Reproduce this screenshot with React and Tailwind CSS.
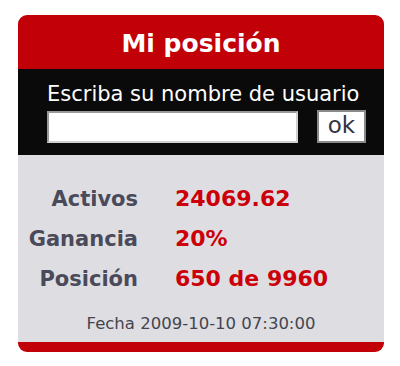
import React from 'react';

const rows = [
  { label: 'Activos', value: '24069.62' },
  { label: 'Ganancia', value: '20%' },
  { label: 'Posición', value: '650 de 9960' },
];

const App = () => {
  return (
    <div className="w-[400px] h-[366px] bg-white pt-[15px] pl-[18px]" style={{ fontFamily: '"DejaVu Sans", Verdana, sans-serif' }}>
      <div className="w-[366px] rounded-[9px] overflow-hidden bg-[#c10008]">
        {/* Title */}
        <div className="h-[54px] flex items-center justify-center text-white font-bold text-[25px] pt-[4px]">
          Mi posición
        </div>

        {/* Login */}
        <div className="h-[86px] bg-[#0a0a0a] pt-[13px] pl-[29px]">
          <div className="text-white text-[21px] leading-[24px] whitespace-nowrap">Escriba su nombre de usuario</div>
          <div className="flex items-center mt-[4px]">
            <input className="w-[251px] h-[32px] bg-white border-2 border-[#9a9a9a] border-b-[#d0d0d0] border-r-[#d0d0d0] outline-none" />
            <button className="ml-[19px] w-[49px] h-[33px] bg-white border-2 border-[#8a8a8a] text-[#333344] text-[23px] leading-none pb-[2px]">
              ok
            </button>
          </div>
        </div>

        {/* Stats */}
        <div className="h-[187px] bg-[#dedee2] pt-[30px]">
          <div className="grid grid-cols-[120px_1fr] gap-x-[37px] gap-y-[12px] font-bold leading-[28px] whitespace-nowrap">
            {rows.map((r) => (
              <React.Fragment key={r.label}>
                <div className="text-right text-[#4a4a5a] text-[21px]">{r.label}</div>
                <div className="text-[#cc000a] text-[22px]">{r.value}</div>
              </React.Fragment>
            ))}
          </div>
          <div className="text-center text-[16.5px] text-[#444450] mt-[19px]">Fecha 2009-10-10 07:30:00</div>
        </div>

        <div className="h-[10px]" />
      </div>
    </div>
  );
};

export default App;
